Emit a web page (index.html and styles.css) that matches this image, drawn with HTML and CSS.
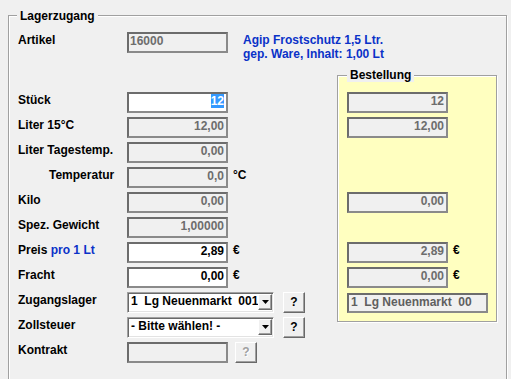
FILE: index.html
```html
<!DOCTYPE html>
<html lang="de">
<head>
    <meta charset="UTF-8">
    <meta name="viewport" content="width=device-width, initial-scale=1.0">
    <title>Lagerzugang</title>
    <link rel="stylesheet" href="styles.css">
</head>
<body>
<div class="page">
    <div class="group main">
        <span class="group-title">Lagerzugang</span>
        <div class="form">
            <!-- Artikel + Beschreibung -->
            <div class="top">
                <span class="label">Artikel</span>
                <div class="field off left">16000</div>
                <div class="info">Agip Frostschutz 1,5 Ltr.<br>gep. Ware, Inhalt: 1,00 Lt</div>
            </div>

            <div class="body">
                <div class="rows">
                    <div class="row">
                        <span class="label">Stück</span>
                        <div class="field on"><span class="sel">12</span></div>
                    </div>
                    <div class="row">
                        <span class="label">Liter 15°C</span>
                        <div class="field off">12,00</div>
                    </div>
                    <div class="row">
                        <span class="label">Liter Tagestemp.</span>
                        <div class="field off">0,00</div>
                    </div>
                    <div class="row">
                        <span class="label indent">Temperatur</span>
                        <div class="field off">0,0</div>
                        <span class="unit">°C</span>
                    </div>
                    <div class="row">
                        <span class="label">Kilo</span>
                        <div class="field off">0,00</div>
                    </div>
                    <div class="row">
                        <span class="label">Spez. Gewicht</span>
                        <div class="field off">1,00000</div>
                    </div>
                    <div class="row">
                        <span class="label">Preis <span class="blue">pro 1 Lt</span></span>
                        <div class="field on">2,89</div>
                        <span class="unit">€</span>
                    </div>
                    <div class="row">
                        <span class="label">Fracht</span>
                        <div class="field on">0,00</div>
                        <span class="unit">€</span>
                    </div>
                    <div class="row">
                        <span class="label">Zugangslager</span>
                        <div class="combo">
                            <span class="combo-text">1  Lg Neuenmarkt  001</span>
                            <span class="combo-btn"><svg width="7" height="4" viewBox="0 0 7 4"><polygon points="0,0 7,0 3.5,4" fill="#000"/></svg></span>
                        </div>
                        <button class="help">?</button>
                    </div>
                    <div class="row">
                        <span class="label">Zollsteuer</span>
                        <div class="combo">
                            <span class="combo-text">- Bitte wählen! -</span>
                            <span class="combo-btn"><svg width="7" height="4" viewBox="0 0 7 4"><polygon points="0,0 7,0 3.5,4" fill="#000"/></svg></span>
                        </div>
                        <button class="help">?</button>
                    </div>
                    <div class="row">
                        <span class="label">Kontrakt</span>
                        <div class="field off"></div>
                        <button class="help small" disabled>?</button>
                    </div>
                </div>

                <!-- Bestellung -->
                <div class="group order">
                    <span class="group-title">Bestellung</span>
                    <div class="order-rows">
                        <div class="row"><div class="field off">12</div></div>
                        <div class="row"><div class="field off">12,00</div></div>
                        <div class="row"></div>
                        <div class="row"></div>
                        <div class="row"><div class="field off">0,00</div></div>
                        <div class="row"></div>
                        <div class="row"><div class="field off">2,89</div><span class="unit">€</span></div>
                        <div class="row"><div class="field off">0,00</div><span class="unit">€</span></div>
                        <div class="row"><div class="field off left wide">1  Lg Neuenmarkt  00</div></div>
                    </div>
                </div>
            </div>
        </div>
    </div>
</div>
</body>
</html>
```

FILE: styles.css
```css
body {
    margin: 0;
    background: #f0f0f0;
    color: #000;
    font: bold 12px "Liberation Sans", Arial, sans-serif;
    overflow: hidden;
}
.page {
    padding: 15px 4px 0 8px;
}
.group {
    border: 1px solid #a0a0a0;
    box-shadow: inset 1px 1px 0 #fff, 1px 1px 0 #fff;
}
.main {
    height: 380px;
}
.group-title {
    display: block;
    width: max-content;
    line-height: 14px;
    padding: 0 3px;
    background: #f0f0f0;
}
.main > .group-title {
    margin: -7px 0 0 8px;
}
.form {
    padding: 9px 0 0 9px;
}
.top {
    display: flex;
    align-items: flex-start;
    height: 43px;
}
.info {
    margin-left: 15px;
    padding-top: 1px;
    line-height: 14px;
    color: #0a32c8;
}
.blue {
    color: #0a32c8;
}
.body {
    display: flex;
    align-items: flex-start;
}
.rows {
    width: 319px;
    padding-top: 17px;
}
.order {
    width: 160px;
    height: 247px;
    box-sizing: border-box;
    background: #ffffc0;
}
.order > .group-title {
    margin: -8px 0 0 9px;
}
.order-rows {
    padding: 10px 0 0 9px;
}
.row {
    display: flex;
    align-items: flex-start;
    height: 25px;
}
.label {
    width: 109px;
    flex: none;
    line-height: 17px;
    white-space: nowrap;
}
.label.indent {
    width: 78px;
    padding-left: 31px;
}
.field {
    flex: none;
    width: 101px;
    height: 21px;
    box-sizing: border-box;
    border: 2px solid #7b7b7b;
    border-color: #6c6c6c #8a8a8a #8a8a8a #6c6c6c;
    padding: 0 2px 0 1px;
    line-height: 15px;
    text-align: right;
    white-space: pre;
    overflow: hidden;
}
.field.on {
    background: #fff;
    color: #000;
}
.field.off {
    background: #f0f0f0;
    color: #6d6d6d;
}
.field.left {
    text-align: left;
}
.field.wide {
    width: 141px;
    height: 20px;
    margin-top: 1px;
    padding-left: 2px;
    color: #5f5f5f;
}
.sel {
    background: #3399ff;
    color: #fff;
}
.unit {
    margin-left: 5px;
    line-height: 17px;
}
.combo {
    flex: none;
    display: flex;
    align-items: flex-start;
    width: 147px;
    height: 21px;
    box-sizing: border-box;
    padding: 1px;
    border: 1px solid;
    border-color: #a0a0a0 #fff #fff #a0a0a0;
    box-shadow: inset 1px 1px 0 #696969, inset -1px -1px 0 #e3e3e3;
    background: #fff;
}
.combo-text {
    flex: 1;
    padding-left: 2px;
    line-height: 15px;
    white-space: pre;
    overflow: hidden;
}
.combo-btn {
    flex: none;
    display: flex;
    align-items: center;
    justify-content: center;
    width: 14px;
    height: 16px;
    box-sizing: border-box;
    background: #f0f0f0;
    border: 1px solid;
    border-color: #fff #696969 #696969 #fff;
    box-shadow: inset -1px -1px 0 #a0a0a0;
}
.help {
    flex: none;
    width: 22px;
    height: 21px;
    margin: 0 0 0 9px;
    padding: 0;
    box-sizing: border-box;
    background: #f0f0f0;
    border: 1px solid;
    border-color: #fff #696969 #696969 #fff;
    box-shadow: inset -1px -1px 0 #a0a0a0;
    font: bold 12px "Liberation Sans", Arial, sans-serif;
    line-height: 15px;
    color: #000;
}
.help.small {
    margin-left: 7px;
}
.help:disabled {
    color: #a0a0a0;
    text-shadow: 1px 1px 0 #fff;
}
```
